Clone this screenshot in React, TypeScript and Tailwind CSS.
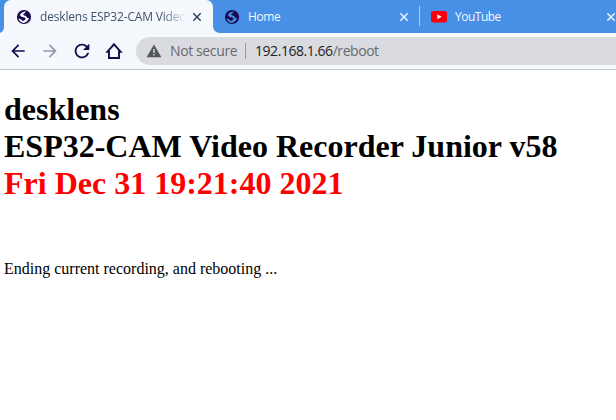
import React from "react";

function Globe({ land }: { land: string }) {
  return (
    <svg viewBox="0 0 16 16" className="block size-4 shrink-0">
      <circle cx="8" cy="8" r="7.1" fill="#180a4c" />
      <path
        d="M10 2.300 7 2.900 4.400 4.800 4.100 6.800l1.900 1.300 2.500.3 1.100 1.200-.6 1.100-1.300 1-1.100.2-1.700-1.700-2.500-.6c.8 2.500 2.800 4.200 5.400 4.300 2.500-.3 4.700-2.400 5.200-4.900l-1.700-.1-1.100-1.700-2.300-.9-.9-1.200 1.500-.9z"
        fill={land}
      />
    </svg>
  );
}

function Close({ color }: { color: string }) {
  return (
    <svg viewBox="0 0 10 10" className="block size-[10px] shrink-0" fill="none" stroke={color} strokeWidth="1.5">
      <path d="M1.300 1.300 8.700 8.700M8.700 1.300 1.300 8.700" />
    </svg>
  );
}

export default function App() {
  return (
    <div className="h-[420px] w-[616px] overflow-hidden bg-white font-['Open_Sans',sans-serif]">
      <header className="flex h-[33px] bg-[#4790e5]">
        <div className="flex w-1 shrink-0 items-end">
          <svg viewBox="0 0 4 6" className="block h-[6px] w-1"><path d="M4 0v6H0C2.500 5 4 3 4 0z" fill="#f5f9fe" /></svg>
        </div>
        <div className="flex w-[209px] shrink-0 items-center rounded-t-[7px] bg-[#f5f9fe] pl-3">
          <Globe land="#f5f9fe" />
          <div className="ml-2 w-[146px] whitespace-nowrap text-[12px] leading-4 tracking-[-0.18px] text-[#40516b] [mask-image:linear-gradient(to_right,black_84%,transparent_100%)]">
            desklens ESP32-CAM Video
          </div>
          <div className="ml-[6px]"><Close color="#28425f" /></div>
        </div>
        <div className="flex w-[7px] shrink-0 items-end">
          <svg viewBox="0 0 7 7" className="block size-[7px]"><path d="M0 0v7h7C3 7 0 4 0 0z" fill="#f5f9fe" /></svg>
        </div>
        <div className="flex w-[199px] shrink-0 items-center pl-1">
          <Globe land="#4790e5" />
          <span className="ml-2 text-[12px] leading-4 tracking-[-0.4px] text-[#f0f7ff]">Home</span>
          <div className="ml-auto mr-[10px]"><Close color="#e8f3ff" /></div>
        </div>
        <div className="mt-[6px] h-5 w-px shrink-0 bg-[#a9cdf5]" />
        <div className="flex w-[196px] shrink-0 items-center pl-[11px]">
          <svg viewBox="0 0 16 12" className="block h-3 w-4 shrink-0">
            <rect width="16" height="11.500" rx="2.500" fill="#f90009" />
            <path d="M6.300 3.300v5l4.400-2.500z" fill="#fff" />
          </svg>
          <span className="ml-2 text-[12px] leading-4 tracking-[-0.5px] text-[#f0f7ff]">YouTube</span>
          <div className="ml-auto"><Close color="#e8f3ff" /></div>
        </div>
      </header>

      <nav className="flex h-[37px] items-center border-b border-[#c2c6cd] bg-[#f5f9fe] pl-2">
        <svg viewBox="0 0 24 24" className="block size-5 shrink-0" fill="#180a4c"><path d="M20 11H7.830l5.590-5.590L12 4l-8 8 8 8 1.410-1.410L7.830 13H20z" /></svg>
        <svg viewBox="0 0 24 24" className="ml-3 block size-5 shrink-0" fill="#9495b0"><path d="m12 4-1.410 1.410L16.170 11H4v2h12.170l-5.580 5.590L12 20l8-8z" /></svg>
        <svg viewBox="0 0 24 24" className="ml-[11px] block size-[22px] shrink-0" fill="#180a4c"><path d="M17.650 6.350C16.200 4.900 14.210 4 12 4c-4.420 0-7.990 3.580-7.990 8s3.570 8 7.990 8c3.730 0 6.840-2.550 7.730-6h-2.080c-.82 2.330-3.040 4-5.650 4-3.310 0-6-2.690-6-6s2.690-6 6-6c1.660 0 3.140.69 4.220 1.780L13 11h7V4z" /></svg>
        <svg viewBox="0 0 18 18" className="ml-3 block size-[18px] shrink-0" fill="none" stroke="#180a4c" strokeWidth="1.900">
          <path d="M2.400 9.700H4V16h10V9.700h1.600L9 2.300z" />
        </svg>
        <div className="ml-[13px] flex h-7 w-[500px] shrink-0 items-center rounded-l-full bg-[#d9dbe0] pl-[10px] text-[14px] leading-5">
          <svg viewBox="0 0 16 14" className="block h-[14px] w-4 shrink-0">
            <path d="M8 .6 15.400 13.300H.6z" fill="#53565b" />
            <path d="M7.300 5h1.400v4H7.300zM7.300 10h1.400v1.500H7.300z" fill="#d9dbe0" />
          </svg>
          <span className="ml-2 w-[68px] whitespace-nowrap tracking-[-0.38px] text-[#66696e]">Not secure</span>
          <div className="ml-[7px] h-4 w-px bg-[#9a9ca1]" />
          <span className="ml-[9px] whitespace-nowrap tracking-[-0.45px] text-[#202124]">192.168.1.66<span className="text-[#66696e]">/reboot</span></span>
        </div>
      </nav>

      <main className="pl-1 pt-[21px] font-['Liberation_Serif',serif] text-black">
        <h1 className="whitespace-nowrap text-[32px] font-bold leading-[37px]">
          desklens
          <br />
          ESP32-CAM Video Recorder Junior v58
          <br />
          <span className="text-[#ff0000]">Fri Dec 31 19:21:40 2021</span>
        </h1>
        <p className="mt-[58px] text-[16px] leading-[18px]">Ending current recording, and rebooting ...</p>
      </main>
    </div>
  );
}
